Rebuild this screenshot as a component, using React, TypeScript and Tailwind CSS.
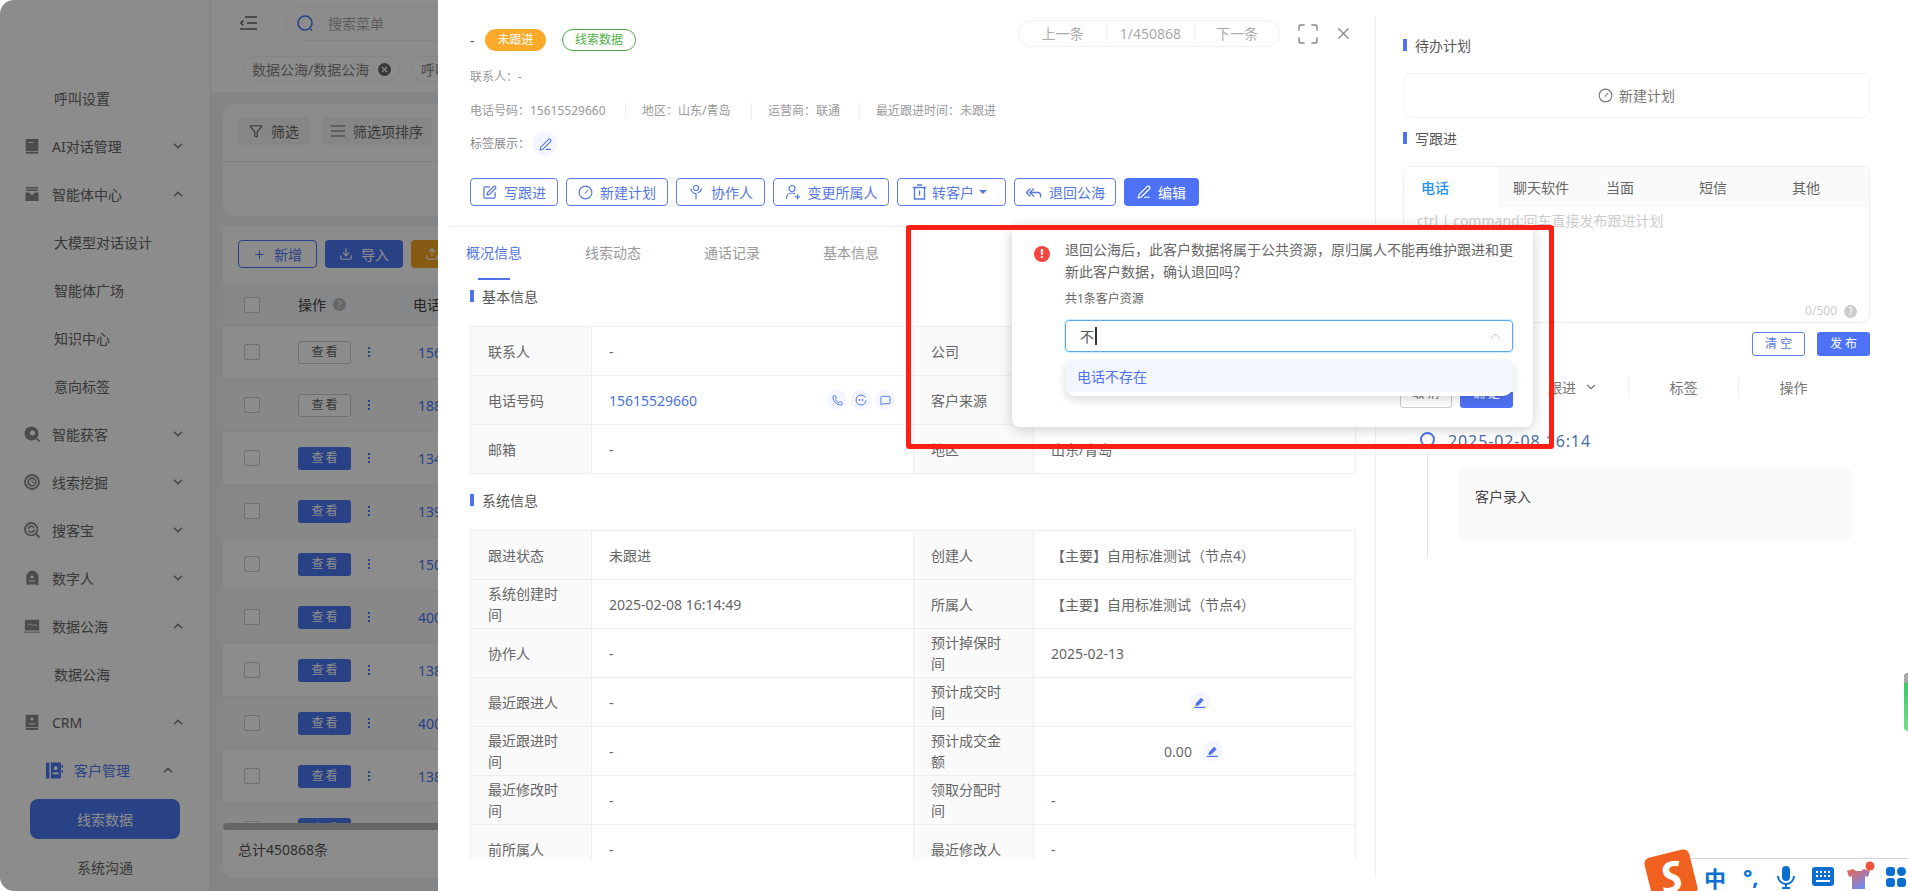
import { ChevronDown, ChevronUp, Download, Funnel, Maximize, MessageSquare, PenLine, Phone, Plus, ReplyAll, SquarePen, Upload, X } from "lucide-react";
import type { ReactNode } from "react";

const svgProps = { width: 16, height: 16, viewBox: "0 0 16 16", fill: "currentColor" };

function BookIcon() {
  return (
    <svg {...svgProps}>
      <path d="M2.500 1h11a.8.8 0 0 1 .8.8V15a.8.8 0 0 1-.8.8h-11A.8.8 0 0 1 1.700 15V1.800A.8.8 0 0 1 2.500 1z" />
      <path d="M4.500 4h5v1h-5zM1.700 13h12.600v.8H1.700z" fill="#fff" />
    </svg>
  );
}

function InboxIcon() {
  return (
    <svg {...svgProps}>
      <path d="M2 1h12v1.400H2zM2 3.600h12V5H2zM1.500 6.400h4l1 2h3l1-2h4V15h-13z" />
    </svg>
  );
}

function LensIcon() {
  return (
    <svg {...svgProps}>
      <circle cx="7.500" cy="7.500" r="7" />
      <circle cx="8.500" cy="7" r="2.500" fill="#fff" />
      <path d="M12 12l3.500 3.500" stroke="currentColor" strokeWidth="1.600" />
    </svg>
  );
}

function TargetIcon() {
  return (
    <svg {...svgProps} fill="none" stroke="currentColor">
      <circle cx="8" cy="8" r="7" strokeWidth="1.800" />
      <circle cx="8" cy="8" r="3.800" strokeWidth="1.800" />
      <path d="M8 5.500v2.800l2 .6" />
    </svg>
  );
}

function RefreshLensIcon() {
  return (
    <svg {...svgProps} fill="none" stroke="currentColor">
      <circle cx="7.200" cy="7.200" r="6.200" strokeWidth="1.800" />
      <path d="M4.200 7.200a3 3 0 0 1 5.600-1.400M10.200 7.400a3 3 0 0 1-5.600 1.300" strokeWidth="1.600" />
      <path d="M12 12l3.500 3.500" strokeWidth="1.800" />
    </svg>
  );
}

function BotIcon() {
  return (
    <svg {...svgProps}>
      <path d="M8 .6a6.500 6.500 0 0 1 6.500 6.500v7.400a1 1 0 0 1-1.700.6l-1-1-1.300 1-1.200-1-1.100 1-1.300-1-1.200 1-1.300-1-1 1a1 1 0 0 1-1.100-.6V7.100A6.500 6.500 0 0 1 8 .6z" />
      <circle cx="8" cy="7" r="1.600" fill="#fff" />
      <path d="M5 10.400h6v1.100H5z" fill="#fff" />
    </svg>
  );
}

function ChartIcon() {
  return (
    <svg width="18" height="16" viewBox="0 0 18 16" fill="currentColor">
      <path d="M1 1h16v12H1z" />
      <path d="M3.500 8l3-2.500 3 2 2-1.200L15 8" fill="none" stroke="#fff" />
      <path d="M0 14.400h18v1H0z" />
    </svg>
  );
}

function ContactIcon() {
  return (
    <svg {...svgProps}>
      <path d="M2.500 .8h11a.8.8 0 0 1 .8.8v13.600a.8.8 0 0 1-.8.8h-11a.8.8 0 0 1-.8-.8V1.600a.8.8 0 0 1 .8-.8z" />
      <circle cx="8" cy="5" r="1.600" fill="#fff" />
      <path d="M5 9.500h6v1H5zM1.700 13h12.600v.8H1.700z" fill="#fff" />
    </svg>
  );
}

function CustomerIcon() {
  return (
    <svg width="18" height="17" viewBox="0 0 18 17" fill="currentColor">
      <path d="M0 0h3.600v17H0zM5.200 0h9.600a1 1 0 0 1 1 1v15a1 1 0 0 1-1 1H5.200z" />
      <circle cx="10.300" cy="6" r="2" fill="#fff" />
      <path d="M7 10.500h6.500v2H7z" fill="#fff" />
      <path d="M16.500 2.500H18v3h-1.500zM16.500 8H18v3h-1.500z" />
    </svg>
  );
}

function PlanIcon({ size = 15 }: { size?: number }) {
  return (
    <svg width={size} height={size} viewBox="0 0 16 16" fill="none" stroke="currentColor" strokeWidth="1.200">
      <circle cx="8" cy="8" r="6.800" />
      <path d="M7.600 8.800l2.800-3.200" strokeLinecap="round" />
    </svg>
  );
}

function HelperIcon() {
  return (
    <svg width="16" height="16" viewBox="0 0 16 16" fill="none" stroke="currentColor" strokeWidth="1.200">
      <circle cx="8" cy="4" r="2.500" />
      <path d="M8 15V9.500M8 9.500C5 9.500 3.500 7.500 2.800 4.800M10 8.800c2.200-.8 3-2 3.500-4" strokeLinecap="round" />
    </svg>
  );
}

function OwnerIcon() {
  return (
    <svg width="16" height="16" viewBox="0 0 16 16" fill="none" stroke="currentColor" strokeWidth="1.200">
      <circle cx="7" cy="4.500" r="3" />
      <path d="M1.500 14.500c0-3.200 2.400-5.500 5.500-5.500 1 0 1.900.2 2.600.6M12.500 10.500v4.500M10.300 12.800h4.400" strokeLinecap="round" />
    </svg>
  );
}

function BinIcon() {
  return (
    <svg width="15" height="16" viewBox="0 0 15 16" fill="none" stroke="currentColor" strokeWidth="1.400">
      <path d="M.8 3.500h13.400M5 1h5M2.500 3.500V15h10V3.500M7.500 6.500v5" />
    </svg>
  );
}

function SmileIcon() {
  return (
    <svg width="12" height="12" viewBox="0 0 12 12" fill="none" stroke="currentColor" strokeWidth="1">
      <path d="M11 6.500A5 5 0 1 1 6 1a5 5 0 0 1 4.300 2.500" />
      <circle cx="4.500" cy="6" r=".5" fill="currentColor" />
      <circle cx="7.500" cy="6" r=".5" fill="currentColor" />
    </svg>
  );
}

function SideRow({ icon, label, open, blue }: { icon: ReactNode; label: string; open?: boolean; blue?: boolean }) {
  return (
    <div className={`flex h-12 items-center ${blue ? "pl-[46px] pr-[35px] text-[#4b78f5]" : "pl-6 pr-[25px] text-[#666]"}`}>
      <span className={`flex justify-center ${blue ? "mr-[11px] w-[17px]" : "mr-3 w-4 text-[#8a8a8a]"}`}>{icon}</span>
      <span className="flex-1 whitespace-nowrap">{label}</span>
      {open ? <ChevronUp size={14} strokeWidth={3} className="text-[#888]" /> : <ChevronDown size={14} strokeWidth={3} className="text-[#888]" />}
    </div>
  );
}

function SubRow({ label }: { label: string }) {
  return <div className="flex h-12 items-center pl-[54px] text-[#666]">{label}</div>;
}

function Sidebar() {
  return (
    <div className="h-full w-[211px] shrink-0 border-r border-[#eee] bg-white pt-[74px] text-[14px]">
      <SubRow label="呼叫设置" />
      <SideRow icon={<BookIcon />} label="AI对话管理" />
      <SideRow icon={<InboxIcon />} label="智能体中心" open />
      <SubRow label="大模型对话设计" />
      <SubRow label="智能体广场" />
      <SubRow label="知识中心" />
      <SubRow label="意向标签" />
      <SideRow icon={<LensIcon />} label="智能获客" />
      <SideRow icon={<TargetIcon />} label="线索挖掘" />
      <SideRow icon={<RefreshLensIcon />} label="搜客宝" />
      <SideRow icon={<BotIcon />} label="数字人" />
      <SideRow icon={<ChartIcon />} label="数据公海" open />
      <SubRow label="数据公海" />
      <SideRow icon={<ContactIcon />} label="CRM" open />
      <SideRow icon={<CustomerIcon />} label="客户管理" open blue />
      <div className="ml-[30px] mt-[5px] flex h-10 w-[150px] items-center justify-center rounded-lg bg-[#4b78f5] text-white">线索数据</div>
      <div className="flex h-14 w-[210px] items-center justify-center text-[#666]">系统沟通</div>
    </div>
  );
}

const tableRows = ["15615529660", "18812345678", "13456789012", "13912345678", "15012345678", "4001234567", "13812345678", "4001234568", "13812345679", "13812345670"];

function ListRow({ phone, index }: { phone: string; index: number }) {
  const outlined = index < 2;
  return (
    <div className={`flex h-[53px] shrink-0 items-center border-b border-[#eee] ${index % 2 === 1 ? "bg-[#f7f8fa]" : "bg-white"}`}>
      <span className="ml-[21px] h-4 w-4 rounded-[2px] border border-[#ccc] bg-white" />
      <span className={`ml-[38px] flex h-[23px] w-[53px] items-center justify-center rounded-[3px] pl-[2px] text-[12px] tracking-[2px] ${outlined ? "border border-[#ccc] bg-white text-[#666]" : "bg-[#4b78f5] text-white"}`}>查看</span>
      <span className="ml-[17px] flex flex-col gap-[2px]">
        <i className="h-[2px] w-[2px] bg-[#4b78f5]" />
        <i className="h-[2px] w-[2px] bg-[#4b78f5]" />
        <i className="h-[2px] w-[2px] bg-[#4b78f5]" />
      </span>
      <span className="ml-[48px] whitespace-nowrap text-[14px] text-[#4b78f5]">{phone}</span>
    </div>
  );
}

function MainArea() {
  return (
    <div className="h-full w-[227px] overflow-hidden bg-[#f0f2f5]">
      <div className="w-[1000px]">
        <div className="flex h-[46px] items-center bg-white pl-[29px]">
          <svg width="17" height="14" viewBox="0 0 17 14" fill="none" stroke="#666" strokeWidth="1.400">
            <path d="M5 1h12M7 7h10M0 13h17M3.500 4.500L.8 7l2.700 2.500" />
          </svg>
          <div className="ml-[28px] flex h-[35px] w-[500px] items-center rounded-l-full border border-[#f3f3f3] pl-[11px]">
            <svg width="17" height="17" viewBox="0 0 17 17" fill="none" stroke="#4b78f5" strokeWidth="1.600">
              <circle cx="8" cy="8" r="7" />
              <path d="M13.500 14l1.500 1.500" />
            </svg>
            <span className="ml-[14px] text-[14px] text-[#aaa]">搜索菜单</span>
          </div>
        </div>
        <div className="flex h-[46px] items-center bg-white pl-[32px]">
          <div className="flex h-[26px] w-[157px] items-center rounded-full border border-[#f3f3f3] pl-2 text-[#888]">
            <span className="whitespace-nowrap text-[14px]">数据公海/数据公海</span>
            <span className="ml-[9px] flex h-[13px] w-[13px] items-center justify-center rounded-full bg-[#666] text-white">
              <X size={9} strokeWidth={3} />
            </span>
          </div>
          <div className="ml-[11px] flex h-[26px] w-[120px] items-center rounded-full border border-[#f3f3f3] pl-[9px] text-[14px] text-[#888]">呼叫设置</div>
        </div>
        <div className="ml-3 mt-3 h-[112px] rounded-xl bg-white">
          <div className="flex h-[58px] items-start gap-3 border-b border-[#eee] pl-[15px] pt-[13px] text-[14px] text-[#666]">
            <div className="flex h-7 w-[72px] items-center justify-center gap-2 rounded bg-[#f5f5f5]">
              <Funnel size={14} />
              筛选
            </div>
            <div className="flex h-7 w-[110px] items-center justify-center gap-2 whitespace-nowrap rounded bg-[#f5f5f5]">
              <svg width="14" height="12" viewBox="0 0 14 12" stroke="#666" strokeWidth="1.200">
                <path d="M0 1h14M0 6h14M0 11h14" />
              </svg>
              筛选项排序
            </div>
          </div>
        </div>
        <div className="ml-3 mt-[10px] rounded-b-xl bg-white">
          <div className="flex gap-2 pl-[15px] pt-[14px] text-[14px]">
            <div className="flex h-7 w-[79px] items-center justify-center gap-2 rounded border border-[#4b78f5] text-[#4b78f5]">
              <Plus size={13} />
              新增
            </div>
            <div className="flex h-7 w-[78px] items-center justify-center gap-2 rounded bg-[#4b78f5] text-white">
              <Download size={14} />
              导入
            </div>
            <div className="flex h-7 w-[78px] items-center justify-center gap-2 rounded bg-[#f5a623] text-white">
              <Upload size={14} />
              导出
            </div>
          </div>
          <div className="mt-4 flex h-[42px] items-center border-b border-[#eee] bg-[#f5f6f8] text-[14px] text-[#444]">
            <span className="ml-[21px] h-4 w-4 rounded-[2px] border border-[#ccc] bg-white" />
            <span className="ml-[38px]">操作</span>
            <span className="ml-[7px] flex h-[13px] w-[13px] items-center justify-center rounded-full bg-[#bbb] text-[9px] text-white">?</span>
            <span className="ml-[67px]">电话号码</span>
          </div>
          <div className="flex h-[497px] flex-col overflow-hidden">
            {tableRows.map((phone, i) => (
              <ListRow key={phone} phone={phone} index={i} />
            ))}
          </div>
          <div className="h-[7px] w-full rounded-full bg-[#bbb]" />
          <div className="flex h-12 items-center pb-[9px] pl-[15px] text-[14px] text-[#555]">总计450868条</div>
        </div>
      </div>
    </div>
  );
}

function OutlineBtn({ icon, label, width, caret }: { icon: ReactNode; label: string; width: string; caret?: boolean }) {
  return (
    <div className={`flex h-7 items-center justify-center rounded border border-[#5b7fe8] text-[14px] text-[#5577e0] ${caret ? "gap-[5px] pr-1" : "gap-[7px]"} ${width}`}>
      {icon}
      <span>{label}</span>
      {caret && <span className="h-0 w-0 border-x-[4px] border-t-[4px] border-x-transparent border-t-[#5577e0]" />}
    </div>
  );
}

function SectionTitle({ title }: { title: string }) {
  return (
    <div className="flex h-5 items-center gap-2 text-[14px] text-[#555]">
      <span className="h-3 w-1 bg-[#4e72f0]" />
      {title}
    </div>
  );
}

function EditDot() {
  return (
    <span className="flex h-5 w-5 items-center justify-center rounded-full bg-[#f3f6fe] text-[#4e72f0]">
      <svg width="11" height="11" viewBox="0 0 11 11" fill="currentColor">
        <path d="M7.200 .8l2.400 2.400-5.200 5.200-3 .6.600-3z" />
        <path d="M0 9.800h11V11H0z" />
      </svg>
    </span>
  );
}

function Cell({ label, children }: { label: string; children: ReactNode }) {
  return (
    <>
      <div className="flex items-center border-l border-t border-[#eee] bg-[#fafafa] pl-[17px] pr-[30px] text-[14px] leading-[21px] text-[#666]">{label}</div>
      <div className="flex items-center border-l border-t border-[#eee] pl-[17px] pr-3 text-[14px] text-[#666]">{children}</div>
    </>
  );
}

function InfoGrid({ children }: { children: ReactNode }) {
  return <div className="grid w-[886px] auto-rows-[49px] grid-cols-[121px_322px_120px_323px] border-b border-r border-[#eee]">{children}</div>;
}

function DetailColumn() {
  return (
    <div className="mt-4 h-[862px] w-[938px] shrink-0 border-r border-[#eef0f3]">
      <div className="ml-3 border-b border-[#eef0f3] pb-5 pl-5 pr-[22px] pt-1">
        <div className="flex justify-between">
          <div className="mt-[9px] flex h-[22px] items-center text-[14px] text-[#555]">
            <span className="w-[15px]">-</span>
            <span className="flex h-[22px] w-[61px] items-center justify-center rounded-full bg-[#fda92a] text-[12px] text-white">未跟进</span>
            <span className="ml-4 flex h-[22px] w-[74px] items-center justify-center rounded-full border border-[#4fae46] text-[12px] text-[#4fae46]">线索数据</span>
          </div>
          <div className="flex h-[27px] items-center text-[14px] text-[#aaa]">
            <div className="flex h-[27px] w-[262px] items-center rounded-full border border-[#eef1f6]">
              <span className="w-[87px] text-center">上一条</span>
              <span className="h-5 border-l border-[#eef1f6]" />
              <span className="w-[87px] text-center">1/450868</span>
              <span className="h-5 border-l border-[#eef1f6]" />
              <span className="flex-1 text-center">下一条</span>
            </div>
            <Maximize size={24} strokeWidth={1.500} className="ml-4 text-[#888]" />
            <X size={19} strokeWidth={1.500} className="ml-[14px] text-[#888]" />
          </div>
        </div>
        <div className="mt-[17px] h-[18px] text-[12px] leading-[18px] text-[#999]">联系人：-</div>
        <div className="mt-4 flex h-[18px] items-center text-[12px] text-[#999]">
          <span className="w-[155px]">电话号码：15615529660</span>
          <span className="h-4 border-l border-[#eee]" />
          <span className="ml-4 w-[109px]">地区：山东/青岛</span>
          <span className="h-4 border-l border-[#eee]" />
          <span className="ml-4 w-[91px]">运营商：联通</span>
          <span className="h-4 border-l border-[#eee]" />
          <span className="ml-4">最近跟进时间：未跟进</span>
        </div>
        <div className="mt-3 flex h-6 items-center text-[12px] text-[#888]">
          标签展示：
          <span className="ml-[3px] flex h-6 w-6 items-center justify-center rounded-full bg-[#f3f6fe] text-[#5577e0]">
            <PenLine size={13} />
          </span>
        </div>
        <div className="mt-[22px] flex gap-2">
          <OutlineBtn icon={<SquarePen size={15} />} label="写跟进" width="w-[88px]" />
          <OutlineBtn icon={<PlanIcon />} label="新建计划" width="w-[102px]" />
          <OutlineBtn icon={<HelperIcon />} label="协作人" width="w-[89px]" />
          <OutlineBtn icon={<OwnerIcon />} label="变更所属人" width="w-[116px]" />
          <OutlineBtn icon={<BinIcon />} label="转客户" width="w-[109px]" caret />
          <OutlineBtn icon={<ReplyAll size={17} />} label="退回公海" width="w-[102px]" />
          <div className="flex h-7 w-[75px] items-center justify-center gap-[7px] rounded bg-[#4e72f5] text-[14px] text-white">
            <PenLine size={14} />
            编辑
          </div>
        </div>
      </div>
      <div className="ml-7 flex gap-[63px] pt-4 text-[14px] leading-5 text-[#999]">
        <div className="flex flex-col text-[#5577e0]">
          概况信息
          <span className="mt-[15px] h-[2px] w-8 self-center bg-[#4e72f0]" />
        </div>
        <span>线索动态</span>
        <span>通话记录</span>
        <span>基本信息</span>
      </div>
      <div className="h-[579px] overflow-hidden pl-8 pt-[6px]">
        <SectionTitle title="基本信息" />
        <div className="mt-5">
          <InfoGrid>
            <Cell label="联系人">-</Cell>
            <Cell label="公司">-</Cell>
            <Cell label="电话号码">
              <span className="flex-1 text-[#4e72d8]">15615529660</span>
              <span className="flex gap-1 pr-[6px] text-[#4e72f0]">
                <span className="flex h-5 w-5 items-center justify-center rounded-full bg-[#f3f6fe]">
                  <Phone size={11} />
                </span>
                <span className="flex h-5 w-5 items-center justify-center rounded-full bg-[#f3f6fe]">
                  <SmileIcon />
                </span>
                <span className="flex h-5 w-5 items-center justify-center rounded-full bg-[#f3f6fe]">
                  <MessageSquare size={11} />
                </span>
              </span>
            </Cell>
            <Cell label="客户来源">-</Cell>
            <Cell label="邮箱">-</Cell>
            <Cell label="地区">山东/青岛</Cell>
          </InfoGrid>
        </div>
        <div className="mt-4">
          <SectionTitle title="系统信息" />
        </div>
        <div className="mt-5">
          <InfoGrid>
            <Cell label="跟进状态">未跟进</Cell>
            <Cell label="创建人">【主要】自用标准测试（节点4）</Cell>
            <Cell label="系统创建时间">2025-02-08 16:14:49</Cell>
            <Cell label="所属人">【主要】自用标准测试（节点4）</Cell>
            <Cell label="协作人">-</Cell>
            <Cell label="预计掉保时间">2025-02-13</Cell>
            <Cell label="最近跟进人">-</Cell>
            <Cell label="预计成交时间">
              <span className="flex flex-1 justify-center pl-[4px]">
                <EditDot />
              </span>
            </Cell>
            <Cell label="最近跟进时间">-</Cell>
            <Cell label="预计成交金额">
              <span className="flex flex-1 items-center justify-center gap-[11px] pr-2">
                0.00
                <EditDot />
              </span>
            </Cell>
            <Cell label="最近修改时间">-</Cell>
            <Cell label="领取分配时间">-</Cell>
            <Cell label="前所属人">-</Cell>
            <Cell label="最近修改人">-</Cell>
          </InfoGrid>
        </div>
      </div>
    </div>
  );
}

function FollowColumn() {
  return (
    <div className="w-[493px] pl-[27px] pt-[35px]">
      <SectionTitle title="待办计划" />
      <div className="mt-[18px] flex h-[45px] w-[467px] items-center justify-center gap-[6px] rounded-lg border border-[#f3f3f3] text-[14px] text-[#777]">
        <PlanIcon />
        新建计划
      </div>
      <div className="mt-[10px]">
        <SectionTitle title="写跟进" />
      </div>
      <div className="mt-[18px] flex h-[157px] w-[467px] flex-col overflow-hidden rounded-lg border border-[#eee]">
        <div className="flex h-10 text-[14px] text-[#666]">
          <span className="flex w-[94px] items-center pl-[17px] font-medium text-[#2491f0]">电话</span>
          <div className="flex flex-1 items-center bg-[#fafafa] pl-[15px]">
            <span className="w-[93px]">聊天软件</span>
            <span className="w-[93px]">当面</span>
            <span className="w-[93px]">短信</span>
            <span>其他</span>
          </div>
        </div>
        <div className="mt-[3px] pl-[13px] text-[14px] text-[#ccc]">ctrl | command:回车直接发布跟进计划</div>
        <div className="mt-auto flex items-center justify-end gap-[7px] pb-[2px] pr-3 text-[12px] text-[#ccc]">
          0/500
          <span className="flex h-[13px] w-[13px] items-center justify-center rounded-full bg-[#ccc] text-[10px] text-white">?</span>
        </div>
      </div>
      <div className="mt-[9px] flex w-[467px] justify-end gap-3 text-[12px]">
        <span className="flex h-6 w-[53px] items-center justify-center rounded-[3px] border border-[#5b7fe8] pl-[3px] tracking-[3px] text-[#5577e0]">清空</span>
        <span className="flex h-6 w-[53px] items-center justify-center rounded-[3px] bg-[#4e72f5] pl-[3px] tracking-[3px] text-white">发布</span>
      </div>
      <div className="mt-[21px] flex h-5 items-center pl-[115px] text-[14px] text-[#777]">
        <span className="flex w-[110px] items-center justify-center gap-2">
          跟进
          <ChevronDown size={14} />
        </span>
        <span className="w-[110px] border-l border-[#eee] text-center">标签</span>
        <span className="w-[110px] border-l border-[#eee] text-center">操作</span>
      </div>
      <div className="mt-8 flex h-6 items-center pl-[17px]">
        <span className="-mt-1 h-[15px] w-[15px] rounded-full border-[2.500px] border-[#4e72f0]" />
        <span className="-mt-px ml-[13px] text-[16px] tracking-[0.9px] text-[#4a6fa8]">2025-02-08 16:14</span>
      </div>
      <div className="ml-6 w-[426px] border-l border-[#e5e5e5] pb-[18px] pl-[30px] pt-[15px]">
        <div className="h-[72px] w-[395px] rounded-lg bg-[#fafafa] pl-[17px] pt-[18px] text-[14px] text-[#444]">客户录入</div>
      </div>
    </div>
  );
}

function ReturnPopover() {
  return (
    <div className="absolute left-[1012px] top-[226px] h-[201px] w-[521px] rounded-lg bg-white pt-[13px] shadow-[0_2px_14px_rgba(0,0,0,0.2)]">
      <div className="flex items-start pl-[22px]">
        <span className="mt-[7px] flex h-4 w-4 shrink-0 items-center justify-center rounded-full bg-[#f5453f] text-[12px] font-bold leading-none text-white">!</span>
        <p className="ml-[15px] w-[448px] text-[14px] leading-[22px] text-[#666]">退回公海后，此客户数据将属于公共资源，原归属人不能再维护跟进和更新此客户数据，确认退回吗？</p>
      </div>
      <div className="pl-[53px] pr-5">
        <div className="mt-[7px] h-[18px] text-[12px] leading-[18px] text-[#666]">共1条客户资源</div>
        <div className="relative mt-3">
          <div className="flex h-8 items-center rounded border border-[#58aaf0] pl-[14px] pr-[9px] text-[14px] text-[#555] shadow-[0_0_0_1px_rgba(88,170,240,0.25)]">
            不
            <span className="ml-[1px] h-[18px] w-[2px] bg-[#333]" />
            <ChevronUp size={16} strokeWidth={1} className="ml-auto text-[#aaa]" />
          </div>
          <div className="absolute left-0 right-0 top-10 z-10 rounded-b-[10px] rounded-t-md bg-white pb-1 shadow-[0_4px_10px_rgba(0,0,0,0.14)]">
            <div className="flex h-8 items-center rounded-t-md bg-[#f3f6fe] pl-3 text-[14px] text-[#4e72f0]">电话不存在</div>
          </div>
        </div>
        <div className="mt-7 flex justify-end gap-2 text-[12px]">
          <span className="flex h-7 w-[52px] items-center justify-center rounded-[3px] border border-[#ccc] pl-[3px] tracking-[3px] text-[#666]">取消</span>
          <span className="flex h-7 w-[53px] items-center justify-center rounded-[3px] bg-[#4e72f5] pl-[3px] tracking-[3px] text-white">确定</span>
        </div>
      </div>
    </div>
  );
}

function ImeBar() {
  return (
    <div className="absolute bottom-0 right-0 flex h-[33px] w-[218px] items-start border-t border-[#c9d3e6] bg-white pl-[14px] pt-[7px] text-[#0a6fd0]">
      <span className="absolute -left-[42px] -top-[6px] flex h-[46px] w-[46px] -rotate-[14deg] items-center justify-center rounded-md bg-[#f0601e] text-[42px] font-bold italic leading-none text-white">S</span>
      <span className="w-[22px] text-center text-[22px] font-bold leading-[24px]">中</span>
      <span className="ml-[17px] w-[17px] text-[22px] font-bold leading-[20px]">°,</span>
      <svg className="ml-[17px]" width="18" height="24" viewBox="0 0 18 24" fill="currentColor">
        <rect x="5" y="0" width="8" height="15" rx="4" />
        <path d="M1 10a8 8 0 0 0 16 0" fill="none" stroke="currentColor" strokeWidth="2" />
        <path d="M8 18h2v3h3v2H5v-2h3z" />
      </svg>
      <svg className="ml-[17px] mt-px" width="22" height="19" viewBox="0 0 22 19" fill="currentColor">
        <rect width="22" height="19" rx="3" />
        <path d="M4 4h2v2H4zM8 4h2v2H8zM12 4h2v2h-2zM16 4h2v2h-2zM4 8h2v2H4zM8 8h2v2H8zM12 8h2v2h-2zM16 8h2v2h-2zM4 13h14v2H4z" fill="#fff" />
      </svg>
      <svg className="ml-[13px] mt-px overflow-visible" width="27" height="24" viewBox="0 0 27 24">
        <defs>
          <linearGradient id="shirtFill" x1="0" y1="0" x2="0.600" y2="1">
            <stop offset="0" stopColor="#f0604a" />
            <stop offset="1" stopColor="#6d8df5" />
          </linearGradient>
        </defs>
        <path d="M0 4l6-2 3 2h5l3-2 6 2-2 6-3-1v13H5V9l-3 1z" fill="url(#shirtFill)" />
        <circle cx="23" cy="-1" r="4.500" fill="#f0503c" />
      </svg>
      <svg className="ml-[12px] mt-px" width="20" height="20" viewBox="0 0 20 20" fill="currentColor">
        <rect width="9" height="9" rx="3" />
        <rect x="11" width="9" height="9" rx="4.500" />
        <rect y="11" width="9" height="9" rx="3" />
        <rect x="11" y="11" width="9" height="9" rx="3" />
      </svg>
    </div>
  );
}

export default function App() {
  return (
    <div className="relative flex h-[891px] w-[1908px] overflow-hidden bg-white font-['Noto_Sans','Noto_Sans_CJK_SC',sans-serif]">
      <div className="relative flex h-full w-[438px] shrink-0 overflow-hidden rounded-l-[14px]">
        <Sidebar />
        <MainArea />
        <div className="absolute inset-0 bg-black/45" />
      </div>
      <DetailColumn />
      <FollowColumn />
      <ReturnPopover />
      <div className="pointer-events-none absolute left-[906px] top-[225px] h-[224px] w-[648px] rounded-[3px] border-[5px] border-[#ff2015]" />
      <div className="absolute right-0 top-[673px] h-[58px] w-1 overflow-hidden rounded-l bg-gradient-to-b from-[#22c55e] to-[#6fe08a]">
        <div className="h-[10px] bg-[#aaa]" />
      </div>
      <ImeBar />
    </div>
  );
}
